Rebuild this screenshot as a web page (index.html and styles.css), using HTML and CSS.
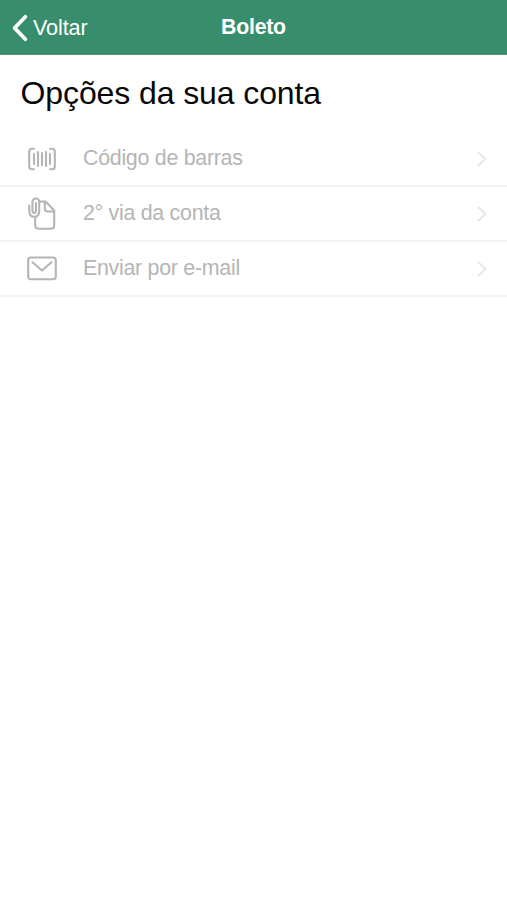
FILE: index.html
```html
<!DOCTYPE html>
<html lang="pt-BR">
<head>
    <meta charset="UTF-8">
    <title>Boleto</title>
    <link rel="stylesheet" href="styles.css">
</head>
<body>
    <header class="navbar">
        <a class="back">
            <svg width="18" height="28" viewBox="0 0 18 28" fill="none" stroke="#fff" stroke-width="3.8" stroke-linecap="round" stroke-linejoin="round">
                <path d="M14.4 2.8L3.6 14L14.4 25.2"/>
            </svg>
            <span>Voltar</span>
        </a>
        <h1 class="navbar-title">Boleto</h1>
    </header>

    <h2 class="heading">Opções da sua conta</h2>

    <ul class="options">
        <li class="option">
            <!-- Código de barras -->
            <svg class="icon" width="32" height="36" viewBox="0 0 32 36">
                <path d="M8 7.8H6Q3.2 7.8 3.2 10.6V25.4Q3.2 28.2 6 28.2H8M24 7.8H26Q28.8 7.8 28.8 10.6V25.4Q28.8 28.2 26 28.2H24"/>
                <path d="M8 13V23M12 11V25M16 12V24M20 11V25M24 13V23"/>
            </svg>
            <span class="label">Código de barras</span>
            <svg class="chevron" width="12" height="20" viewBox="0 0 12 20">
                <path d="M2 3L9.5 10L2 17"/>
            </svg>
        </li>
        <li class="option">
            <!-- Documento com clipe -->
            <svg class="icon" width="32" height="36" viewBox="0 0 32 36">
                <path d="M13.5 5.5H19.5L28.2 14.5V29.5Q28.2 32.8 25 32.8H12.8Q9.2 32.8 9.2 29.5V21.5M18.8 5.5V12.5Q18.8 15.5 21.5 15.5H28"/>
                <path d="M3.3 9.5V15Q3.3 20.8 8.2 20.8Q13.2 20.8 13.2 15V6Q13.2 2.5 9.8 2.5Q6.5 2.5 6.5 6V14.5Q6.5 17 8.2 17Q10 17 10 14.5V7"/>
            </svg>
            <span class="label">2° via da conta</span>
            <svg class="chevron" width="12" height="20" viewBox="0 0 12 20">
                <path d="M2 3L9.5 10L2 17"/>
            </svg>
        </li>
        <li class="option">
            <!-- Envelope -->
            <svg class="icon" width="32" height="36" viewBox="0 0 32 36">
                <rect x="2.2" y="6.5" width="27.6" height="21.8" rx="2.8"/>
                <path d="M6.5 11.3L16 19.5L25.5 11.3"/>
            </svg>
            <span class="label">Enviar por e-mail</span>
            <svg class="chevron" width="12" height="20" viewBox="0 0 12 20">
                <path d="M2 3L9.5 10L2 17"/>
            </svg>
        </li>
    </ul>
</body>
</html>
```
FILE: styles.css
```css
body {
    margin: 0;
    background-color: #fff;
    font-family: "Liberation Sans", Arial, sans-serif;
}
.navbar {
    display: grid;
    grid-template-columns: 1fr auto 1fr;
    align-items: center;
    box-sizing: border-box;
    height: 55px;
    padding: 0 11px;
    background-color: #388e6c;
    border-bottom: 1px solid #4b9879;
    color: #fff;
}
.back {
    display: flex;
    align-items: center;
    gap: 4px;
    padding-top: 1px;
    font-size: 21.6px;
    letter-spacing: -0.1px;
}
.navbar-title {
    margin: 0;
    font-size: 21.3px;
    line-height: 24px;
    letter-spacing: -0.25px;
}
.heading {
    margin: 0;
    padding: 20px 20.5px 0;
    font-size: 32px;
    font-weight: normal;
    line-height: 36px;
    letter-spacing: -0.1px;
    color: #080808;
}
.options {
    margin: 21px 0 0;
    padding: 0;
    list-style: none;
}
.option {
    display: flex;
    align-items: center;
    box-sizing: border-box;
    height: 55px;
    padding: 0 19px 0 26px;
    border-bottom: 2px solid #f3f3f3;
}
.label {
    flex: 1;
    margin-left: 25px;
    padding-bottom: 2px;
    font-size: 21.4px;
    line-height: 24px;
    letter-spacing: -0.28px;
    color: #b5b5b5;
}
.icon {
    fill: none;
    stroke: #b5b5b5;
    stroke-width: 2.1;
    stroke-linecap: round;
    stroke-linejoin: round;
}
.chevron {
    fill: none;
    stroke: #e6e6e6;
    stroke-width: 1.8;
}
```
